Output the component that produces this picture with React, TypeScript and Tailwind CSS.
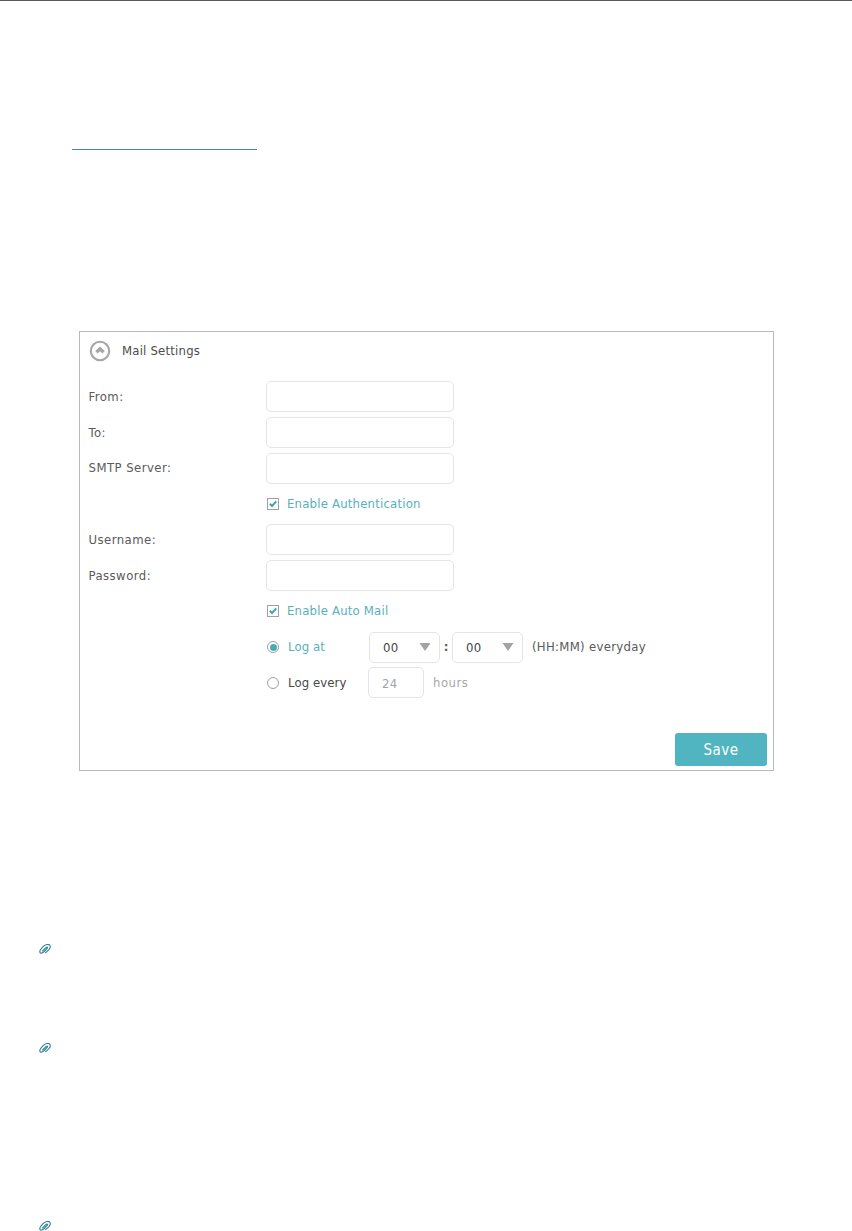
import React, { useState } from 'react';

const inputClass =
  'block h-[31px] w-[188px] rounded-[5px] border border-[#e4e4e4] bg-white px-3 outline-none focus:border-[#4fb3bf]';

const PaperclipIcon: React.FC = () => (
  <svg className="block h-[10px] w-[12px]" viewBox="0 0 12 10" fill="none" stroke="#2a8093" strokeWidth="1.1" strokeLinecap="round">
    <path d="M3.6 6.9 7.2 3.4C8.1 2.6 9 3.3 8.3 4.2L5.2 7.5C3.7 9.1 1.4 9.8.9 8.3.5 7 1.3 5.6 2.5 4.3L4.6 2.2C6.4.4 9.7-.1 10.8 1.2 11.8 2.6 11 4.4 9.7 5.8L6.6 8.6" />
  </svg>
);

const CollapseIcon: React.FC = () => (
  <svg className="block h-[22px] w-[22px]" viewBox="0 0 22 22" fill="none" stroke="#a6a6a6">
    <circle cx="11" cy="11" r="9.2" strokeWidth="2.1" />
    <path d="M7.4 12.3 11 8.9l3.6 3.4" strokeWidth="3.4" />
  </svg>
);

interface FieldProps {
  label: string;
  type?: string;
}

const Field: React.FC<FieldProps> = ({ label, type = 'text' }) => (
  <label className="flex h-[35.75px] items-center">
    <span className="w-[178px] pl-[0.5px] tracking-[0.45px]">{label}</span>
    <input type={type} className={inputClass} />
  </label>
);

interface CheckProps {
  label: string;
  checked: boolean;
  onChange: () => void;
}

const Check: React.FC<CheckProps> = ({ label, checked, onChange }) => (
  <div className="flex h-[35.75px] items-center pl-[179px]">
    <button type="button" role="checkbox" aria-checked={checked} onClick={onChange} className="flex items-center tracking-[0.2px] text-[#58b1bb]">
      <span className="mr-[8px] flex h-[12px] w-[12px] items-center justify-center border border-[#a0a0a0]">
        {checked && (
          <svg className="h-[8px] w-[8px]" viewBox="0 0 8 8" fill="none" stroke="#3fa6b3" strokeWidth="2">
            <path d="M.8 3.8 3 6l4.3-4.6" />
          </svg>
        )}
      </span>
      {label}
    </button>
  </div>
);

interface RadioProps {
  label: string;
  checked: boolean;
  onChange: () => void;
}

const Radio: React.FC<RadioProps> = ({ label, checked, onChange }) => (
  <button type="button" role="radio" aria-checked={checked} onClick={onChange} className="flex items-center tracking-[0.1px]">
    <span className="mr-[9px] flex h-[12px] w-[12px] items-center justify-center rounded-full border border-[#a0a0a0]">
      {checked && <span className="h-[7px] w-[7px] rounded-full bg-[#46adb8]" />}
    </span>
    <span className={checked ? 'text-[#58b1bb]' : 'text-[#484848]'}>{label}</span>
  </button>
);

const TimeSelect: React.FC = () => (
  <button type="button" className="flex h-[31px] w-[71px] items-center justify-between rounded-[5px] border border-[#e4e4e4] bg-white pr-[8px] pl-[13px] text-[#444]">
    <span className="pt-[2px] tracking-[0.3px]">00</span>
    <svg className="h-[8px] w-[12px]" viewBox="0 0 12 8" fill="#a3a3a3">
      <path d="M.5 0h11L6 8z" />
    </svg>
  </button>
);

const App: React.FC = () => {
  const [auth, setAuth] = useState(true);
  const [autoMail, setAutoMail] = useState(true);
  const [mode, setMode] = useState<'at' | 'every'>('at');

  return (
    <div className="h-[1231px] w-[852px] overflow-hidden border-t border-[#58585a] bg-white font-['DejaVu_Sans_Condensed','DejaVu_Sans',sans-serif] text-[13px] leading-[18px] text-[#5a5a5a]">
      <div className="mt-[148px] ml-[72px] h-px w-[185px] bg-[#468b99]" />

      <section className="mt-[181px] ml-[79px] flex h-[440px] w-[695px] flex-col border border-[#b9b9bb]">
        <header className="flex h-[47px] items-center pb-[9px] pl-[9px]">
          <CollapseIcon />
          <h2 className="ml-[11px] tracking-[0.2px] text-[#4c4c4c]">Mail Settings</h2>
        </header>

        <form className="flex grow flex-col pl-[8px]" onSubmit={(e) => e.preventDefault()}>
          <Field label="From:" />
          <Field label="To:" />
          <Field label="SMTP Server:" />
          <Check label="Enable Authentication" checked={auth} onChange={() => setAuth(!auth)} />
          <Field label="Username:" />
          <Field label="Password:" type="password" />
          <Check label="Enable Auto Mail" checked={autoMail} onChange={() => setAutoMail(!autoMail)} />

          <div className="flex h-[35.75px] items-center pl-[179px]">
            <div className="w-[102px]">
              <Radio label="Log at" checked={mode === 'at'} onChange={() => setMode('at')} />
            </div>
            <TimeSelect />
            <span className="w-[12px] text-center font-bold">:</span>
            <TimeSelect />
            <span className="ml-[9px] tracking-[0.3px]">(HH:MM) everyday</span>
          </div>

          <div className="flex h-[35.75px] items-center pl-[179px]">
            <div className="w-[101px]">
              <Radio label="Log every" checked={mode === 'every'} onChange={() => setMode('every')} />
            </div>
            <input defaultValue="24" className="h-[31px] w-[56px] rounded-[5px] border border-[#e4e4e4] pt-[2px] pl-[13px] tracking-[0.4px] text-[#a3a3a3] outline-none" />
            <span className="ml-[9px] tracking-[0.5px] text-[#a8a8a8]">hours</span>
          </div>

          <button type="submit" className="mt-auto mr-[6px] mb-[4px] h-[33px] w-[92px] self-end rounded-[3px] bg-[#50b5c0] text-[15px] tracking-[0.5px] text-white">
            Save
          </button>
        </form>
      </section>

      <div className="mt-[173px] ml-[39px] flex flex-col">
        <PaperclipIcon />
        <div className="mt-[89px]">
          <PaperclipIcon />
        </div>
        <div className="mt-[168px]">
          <PaperclipIcon />
        </div>
      </div>
    </div>
  );
};

export default App;
